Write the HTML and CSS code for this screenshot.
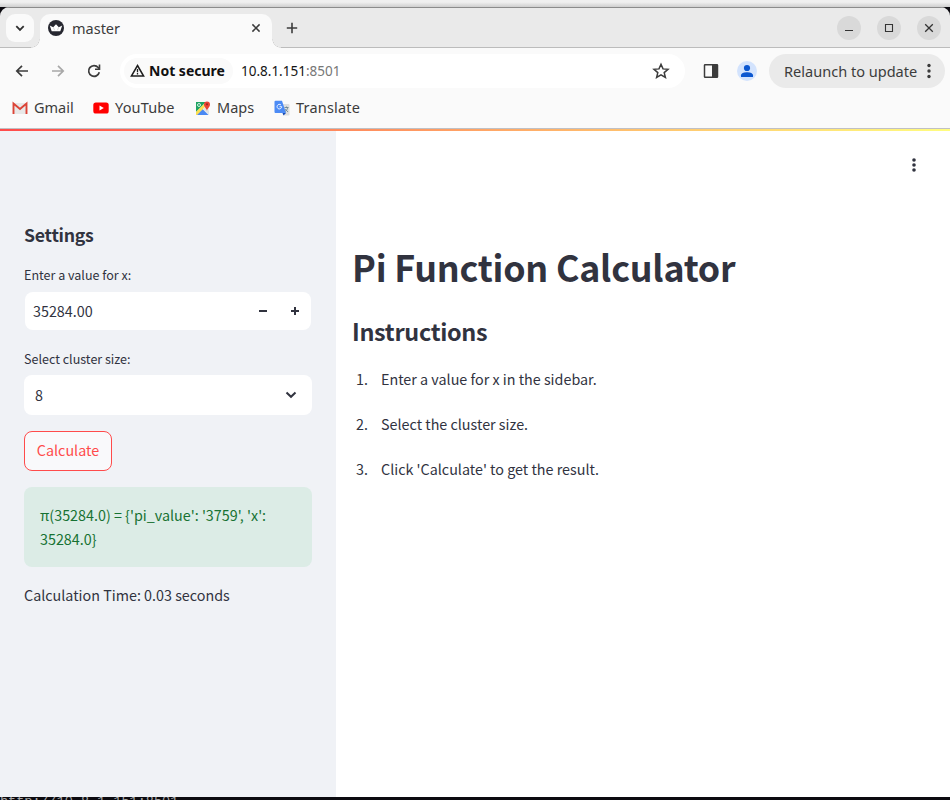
FILE: index.html
```html
<!DOCTYPE html>
<html lang="en">
<head>
<meta charset="utf-8">
<title>master</title>
<link rel="stylesheet" href="styles.css">
</head>
<body>
<div class="desktop-top"></div>
<div class="window">
  <div class="tabstrip">
    <button class="tab-search"><svg width="16" height="16" viewBox="0 0 16 16"><path d="M4.3 6.2 8 9.9l3.7-3.7" fill="none" stroke="#303030" stroke-width="1.8"/></svg></button>
    <div class="tab">
      <svg width="16" height="16" viewBox="0 0 16 16"><circle cx="8" cy="8" r="8" fill="#262730"/><path d="M1.800 5.500 5.200 7.300 8 4.200l2.800 3.100L14.200 5.500 12.300 11.200H3.700Z" fill="#fff"/><path d="M5.300 7.400 6.600 10.200M10.700 7.400 9.400 10.200" stroke="#bbb" stroke-width=".6"/></svg>
      <span class="tab-title">master</span>
      <svg class="tab-close" width="10" height="10" viewBox="0 0 10 10"><path d="m1.400 1.400 7.200 7.200m0-7.200L1.400 8.600" stroke="#3c3c3c" stroke-width="1.500"/></svg>
    </div>
    <svg class="new-tab" width="12" height="12" viewBox="0 0 12 12"><path d="M6 .8v10.400M.8 6h10.400" stroke="#3c3c3c" stroke-width="1.6"/></svg>
    <div class="controls">
      <span class="control"><svg width="24" height="24" viewBox="0 0 24 24"><path d="M8 14.500h8" stroke="#333"/></svg></span>
      <span class="control"><svg width="24" height="24" viewBox="0 0 24 24"><path d="M8.500 8.500h7v7h-7z" fill="none" stroke="#333" stroke-width="1.100"/></svg></span>
      <span class="control"><svg width="24" height="24" viewBox="0 0 24 24"><path d="m8.200 8.200 7.600 7.600m0-7.600-7.600 7.600" stroke="#333" stroke-width="1.300"/></svg></span>
    </div>
  </div>
  <div class="toolbar">
    <svg class="nav" width="16" height="16" viewBox="0 0 16 16"><path d="M14 8H3M8 2.800 2.800 8 8 13.200" fill="none" stroke="#3c3c3c" stroke-width="1.700"/></svg>
    <svg class="nav" width="16" height="16" viewBox="0 0 16 16"><path d="M2 8h11M8 2.800 13.200 8 8 13.200" fill="none" stroke="#a8a8a8" stroke-width="1.700"/></svg>
    <svg class="nav" width="16" height="16" viewBox="0 0 16 16"><path d="M13.300 9.300A5.400 5.400 0 1 1 12.200 4.500L13.500 6" fill="none" stroke="#3c3c3c" stroke-width="1.700"/><path d="M13.500 1.600V6.200H9" fill="none" stroke="#3c3c3c" stroke-width="1.600"/></svg>
    <div class="omnibox">
      <div class="security">
        <svg width="15" height="13" viewBox="0 0 15 13"><path d="M7.500 1.500 13.600 12H1.400Z" fill="none" stroke="#1f1f1f" stroke-width="1.500"/><path d="M7.500 5v3.200M7.500 9.100v1.400" stroke="#1f1f1f" stroke-width="1.300"/></svg>
        <span>Not secure</span>
      </div>
      <span class="url">10.8.1.151<span class="port">:8501</span></span>
      <svg class="star" width="18" height="18" viewBox="0 0 18 18"><path d="m9 2.300 2 4.600 5 .4-3.800 3.300 1.200 4.900L9 12.900l-4.400 2.600 1.200-4.900L2 7.300l5-.4Z" fill="none" stroke="#3c3c3c" stroke-width="1.500"/></svg>
    </div>
    <svg class="panel" width="16" height="16" viewBox="0 0 16 16"><rect x="1.500" y="1.700" width="13" height="12.600" rx=".6" fill="none" stroke="#3c3c3c" stroke-width="1.500"/><path d="M9 1.700h5.500v12.600H9z" fill="#3c3c3c"/></svg>
    <svg class="profile" width="20" height="20" viewBox="0 0 20 20"><circle cx="10" cy="10" r="10" fill="#d3e3fd"/><circle cx="10" cy="7" r="3.100" fill="#0b57d0"/><path d="M4 16v-1.700C4 12 7.500 11.200 10 11.200s6 .8 6 3.100V16Z" fill="#0b57d0"/></svg>
    <div class="relaunch"><span>Relaunch to update</span><svg width="4" height="16" viewBox="0 0 4 16"><g fill="#3c3c3c"><circle cx="2" cy="2.500" r="1.700"/><circle cx="2" cy="8" r="1.700"/><circle cx="2" cy="13.500" r="1.700"/></g></svg></div>
  </div>
  <div class="bookmarks">
    <a class="bm gmail"><svg width="16" height="16" viewBox="0 0 16 16"><path d="M1 3h14v11H1Z" fill="#e8e8e8"/><path d="M1.500 14V3.500L8 9l6.500-5.500V14" fill="none" stroke="#dc4437" stroke-width="1.900"/></svg><span>Gmail</span></a>
    <a class="bm youtube"><svg width="16" height="16" viewBox="0 0 16 16"><rect x=".3" y="2.500" width="15.400" height="11" rx="2.600" fill="#f00"/><path d="m6.500 5.500 4.300 2.500-4.300 2.500Z" fill="#fff"/></svg><span>YouTube</span></a>
    <a class="bm maps"><svg width="16" height="16" viewBox="0 0 16 16"><rect x="1" y="2" width="13" height="13" rx="1" fill="#eceff1"/><path d="M1 2h10L1 12Z" fill="#1ea362"/><path d="m1.500 15 6-6 6 6Z" fill="#4a89f3"/><path d="M1 12 11 2l2 2L2 15H1Z" fill="#ffdf4f"/><path d="m8 9 2-2 4 4v3Z" fill="#dfe3e5"/><circle cx="4" cy="5" r="1.500" fill="none" stroke="#fff" stroke-width=".8"/><path d="M12 11c-.3-3-3-3.500-3-6.500a3 3 0 0 1 6 0c0 3-2.700 3.500-3 6.500Z" fill="#ea4335"/><circle cx="12" cy="4.300" r="1.100" fill="#992b21"/></svg><span>Maps</span></a>
    <a class="bm translate"><svg width="16" height="16" viewBox="0 0 16 16"><path d="M7 4h7.500a1 1 0 0 1 1 1v9.500a1 1 0 0 1-1 1H10Z" fill="#dedede"/><path d="M1.500.8H8L12 13H1.500a1 1 0 0 1-1-1V1.800a1 1 0 0 1 1-1Z" fill="#4c8bf5"/><path d="M8.500 13H12l-2.500 2.500Z" fill="#174bb2"/><path d="M5.500 6.700h2.200A2.300 2.300 0 1 1 7 5" fill="none" stroke="#fff" stroke-width=".9"/><path d="M10.500 7.500h4M12.500 6.500v1m1.200 0c-.2 2-1.600 3.400-2.700 4m.2-2.500 2.800 3" fill="none" stroke="#607d8b" stroke-width=".8"/></svg><span>Translate</span></a>
  </div>
  <div class="app">
    <aside class="sidebar">
      <h3>Settings</h3>
      <label>Enter a value for x:</label>
      <div class="number-input"><span class="value">35284.00</span><span class="step"><svg width="8" height="8" viewBox="0 0 8 8"><path d="M0 4h8" stroke="#31333f" stroke-width="2"/></svg></span><span class="step"><svg width="8" height="8" viewBox="0 0 8 8"><path d="M0 4h8M4 0v8" stroke="#31333f" stroke-width="2"/></svg></span></div>
      <label>Select cluster size:</label>
      <div class="select"><span class="value">8</span><svg width="12" height="8" viewBox="0 0 12 8"><path d="m1.500 1.500 4.500 4.300 4.500-4.300" fill="none" stroke="#31333f" stroke-width="2"/></svg></div>
      <button class="calculate">Calculate</button>
      <div class="alert">π(35284.0) = {'pi_value': '3759', 'x': 35284.0}</div>
      <p class="time">Calculation Time: 0.03 seconds</p>
    </aside>
    <main class="main">
      <svg class="menu" width="4" height="14" viewBox="0 0 4 14"><g fill="#31333f"><circle cx="2" cy="2" r="1.800"/><circle cx="2" cy="7" r="1.800"/><circle cx="2" cy="12" r="1.800"/></g></svg>
      <h1>Pi Function Calculator</h1>
      <h2>Instructions</h2>
      <ol>
        <li>Enter a value for x in the sidebar.</li>
        <li>Select the cluster size.</li>
        <li>Click 'Calculate' to get the result.</li>
      </ol>
    </main>
  </div>
</div>
<div class="terminal"><span>http://10.8.1.151:8501</span></div>
</body>
</html>
```

FILE: styles.css
```css
* { box-sizing: border-box; }
body {
  margin: 0;
  width: 950px;
  height: 800px;
  display: flex;
  flex-direction: column;
  overflow: hidden;
  background: #0c0b10;
  font-family: "Noto Sans", sans-serif;
  color: #3c3c3c;
}
svg { display: block; flex: none; }
button { font: inherit; padding: 0; border: 0; }

.desktop-top { height: 7px; flex: none; background: linear-gradient(#f0f0f0 30%, #cfcfcf); }
.window { height: 790px; flex: none; display: flex; flex-direction: column; border-radius: 9px 9px 0 0; overflow: hidden; }

.tabstrip {
  height: 41px;
  flex: none;
  display: flex;
  align-items: center;
  background: #eaeaea;
  border-top: 1px solid #8c8c8c;
  border-bottom: 1px solid #bcbcbc;
  padding: 0 9px 0 6px;
}
.tab-search { width: 28px; height: 28px; border-radius: 9px; background: #fafafa; display: grid; place-items: center; }
.tab {
  position: relative;
  width: 232px;
  height: 34px;
  align-self: flex-end;
  margin: 0 0 -1px 6px;
  padding: 0 11px 6px 8px;
  display: flex;
  align-items: center;
  background: #fafafa;
  border-radius: 10px 10px 0 0;
}
.tab::before, .tab::after { content: ""; position: absolute; bottom: 0; width: 9px; height: 9px; }
.tab::before { left: -9px; background: radial-gradient(circle at 0 0, transparent 8px, #d0d0d0 8.300px, #fafafa 9px); }
.tab::after { right: -9px; background: radial-gradient(circle at 100% 0, transparent 8px, #d0d0d0 8.300px, #fafafa 9px); }
.tab-title { margin-left: 8px; font-size: 14.500px; }
.tab-close { margin-left: auto; }
.new-tab { margin-left: 14px; }
.controls { margin-left: auto; display: flex; gap: 16px; }
.control { width: 24px; height: 24px; border-radius: 50%; background: #d9d9d9; }

.toolbar { height: 45px; flex: none; display: flex; align-items: center; background: #fafafa; padding: 0 5px 0 14px; }
.nav { margin-right: 20px; }
.nav + .nav + .nav { margin-right: 18px; }
.omnibox { width: 565px; height: 34px; border-radius: 17px; background: #fff; display: flex; align-items: center; padding: 0 15px 0 4px; }
.security { height: 26px; width: 109px; border-radius: 13px; background: #fafafa; display: flex; align-items: center; gap: 4px; padding-left: 6px; font-size: 14px; font-weight: 700; color: #111; white-space: nowrap; }
.url { margin-left: 8px; font-size: 13.500px; color: #151515; }
.port { color: #777; }
.star { margin-left: auto; }
.panel { margin-left: 18px; }
.profile { margin-left: 18px; }
.relaunch { margin-left: 12px; width: 176px; height: 34px; flex: none; border-radius: 17px; background: #eaeaea; display: flex; align-items: center; justify-content: space-between; padding: 0 14px 0 15px; font-size: 14.550px; white-space: nowrap; }

.bookmarks { height: 36px; flex: none; display: flex; background: #fafafa; border-bottom: 1px solid #c0c0c4; padding-left: 12px; font-size: 14.500px; }
.bm { display: flex; align-items: center; gap: 6px; height: 29px; }
.bm span { margin-top: -1px; }
.gmail { width: 81px; }
.youtube { width: 102px; letter-spacing: .15px; }
.maps { width: 79px; }
.translate { letter-spacing: .2px; }

.app { position: relative; flex: 1; display: flex; background: #fff; font-family: "Noto Sans CJK SC", "Noto Sans", sans-serif; font-size: 14.330px; line-height: 24px; color: #31333f; }
.app::before { content: ""; position: absolute; inset: 0 0 auto; height: 2px; background: linear-gradient(90deg, #ff4b4b, #fffd80); }
.sidebar { width: 336px; background: #f0f2f6; padding: 93px 24px 0; display: flex; flex-direction: column; }
h1, h2, h3, p, ol { margin: 0; }
h3 { font-size: 17.700px; line-height: 24px; font-weight: 600; letter-spacing: -.25px; margin-bottom: 19px; }
label { font-size: 12.540px; line-height: 20px; margin-bottom: 7px; }
.number-input { height: 38px; margin: 0 1px 19px; border-radius: 8px; background: #fff; display: flex; align-items: center; padding-left: 8px; }
.number-input .value { flex: 1; }
.step { width: 32px; display: grid; place-items: center; }
.number-input + label { margin-bottom: 6px; }
.select { height: 40px; border-radius: 8px; background: #fff; display: flex; align-items: center; justify-content: space-between; padding: 0 15px 0 11px; }
.calculate { margin-top: 16px; width: 88px; height: 40px; padding-bottom: 2px; border: 1px solid #ff4b4b; border-radius: 8px; background: #f9f9fb; color: #ff4b4b; }
.alert { margin-top: 16px; height: 80px; padding: 16px; border-radius: 8px; background: #dcece6; color: #177233; }
.time { margin-top: 16px; }
.main { flex: 1; position: relative; padding: 113px 16px 0; }
.menu { position: absolute; top: 29px; right: 34px; }
h1 { font-size: 35.800px; line-height: 48px; font-weight: 700; letter-spacing: -.23px; white-space: nowrap; }
h2 { font-size: 23.400px; line-height: 32px; font-weight: 600; letter-spacing: -.3px; margin-top: 25px; }
ol { margin-top: 20px; padding-left: 4px; list-style: none; counter-reset: step; }
li { display: flex; margin-bottom: 21px; counter-increment: step; }
li::before { content: counter(step) "."; width: 25px; flex: none; }
.terminal { height: 3px; overflow: hidden; background: #0c0b10; color: #aaa; font: 13.500px/16px "Liberation Mono", monospace; }
.terminal span { display: block; margin-top: -3px; }
```
